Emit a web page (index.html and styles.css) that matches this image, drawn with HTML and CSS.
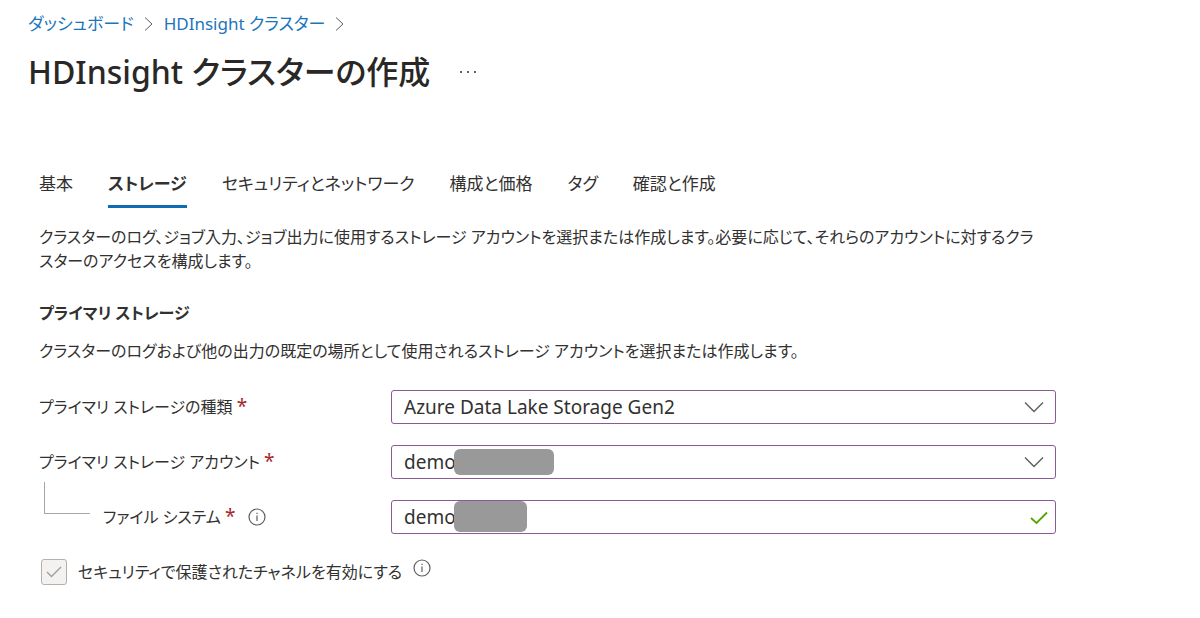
FILE: index.html
```html
<!DOCTYPE html>
<html lang="ja">
<head>
    <meta charset="UTF-8">
    <meta name="viewport" content="width=device-width, initial-scale=1.0">
    <title>HDInsight クラスターの作成</title>
    <link rel="stylesheet" href="styles.css">
</head>
<body>

    <header class="page-header">
        <nav class="breadcrumb">
            <a href="#">ダッシュボード</a>
            <svg class="separator" viewBox="0 0 10 16"><path d="M1 1.5 8 8 1 14.5"/></svg>
            <a href="#">HDInsight クラスター</a>
            <svg class="separator" viewBox="0 0 10 16"><path d="M1 1.5 8 8 1 14.5"/></svg>
        </nav>
        <div class="title-row">
            <h1>HDInsight クラスターの作成</h1>
            <button type="button" class="more" aria-label="その他">
                <svg viewBox="0 0 18 4"><circle cx="2" cy="2" r="1"/><circle cx="9" cy="2" r="1"/><circle cx="16" cy="2" r="1"/></svg>
            </button>
        </div>
    </header>

    <main class="content">
        <nav class="tabs">
            <a href="#">基本</a>
            <a href="#" class="active">ストレージ</a>
            <a href="#">セキュリティとネットワーク</a>
            <a href="#">構成と価格</a>
            <a href="#">タグ</a>
            <a href="#">確認と作成</a>
        </nav>

        <p class="intro">クラスターのログ、ジョブ入力、ジョブ出力に使用するストレージ アカウントを選択または作成します。必要に応じて、それらのアカウントに対するクラスターのアクセスを構成します。</p>

        <h2>プライマリ ストレージ</h2>
        <p>クラスターのログおよび他の出力の既定の場所として使用されるストレージ アカウントを選択または作成します。</p>

        <form class="form">
            <div class="row">
                <label for="tipo">プライマリ ストレージの種類 <span class="required">*</span></label>
                <div class="field">
                    <select id="tipo">
                        <option>Azure Data Lake Storage Gen2</option>
                    </select>
                    <svg class="chevron" viewBox="0 0 20 12"><path d="M1 1.5 10 10.5 19 1.5"/></svg>
                </div>
            </div>

            <div class="row">
                <label for="cuenta">プライマリ ストレージ アカウント <span class="required">*</span></label>
                <div class="field">
                    <select id="cuenta">
                        <option>demo</option>
                    </select>
                    <span class="mask mask-account"></span>
                    <svg class="chevron" viewBox="0 0 20 12"><path d="M1 1.5 10 10.5 19 1.5"/></svg>
                </div>
            </div>

            <div class="row">
                <div class="nested">
                    <span class="branch"></span>
                    <label for="sistema">ファイル システム <span class="required">*</span></label>
                    <svg class="info" viewBox="0 0 18 18"><circle cx="9" cy="9" r="8"/><path d="M9 7.5V13M9 4.8V6"/></svg>
                </div>
                <div class="field">
                    <input type="text" id="sistema" value="demo">
                    <span class="mask mask-filesystem"></span>
                    <svg class="valid" viewBox="0 0 18 14"><path d="M1 7 6.5 12 17 1.5"/></svg>
                </div>
            </div>

            <div class="check-row">
                <span class="checkbox">
                    <input type="checkbox" id="canal" checked disabled>
                    <svg viewBox="0 0 16 12"><path d="M1 6 5.5 10.5 15 1"/></svg>
                </span>
                <label for="canal">セキュリティで保護されたチャネルを有効にする</label>
                <svg class="info" viewBox="0 0 18 18"><circle cx="9" cy="9" r="8"/><path d="M9 7.5V13M9 4.8V6"/></svg>
            </div>
        </form>
    </main>

</body>
</html>
```

FILE: styles.css
```css
* {
    margin: 0;
    padding: 0;
    box-sizing: border-box;
}

body {
    font-family: "Noto Sans", "Noto Sans CJK JP", sans-serif;
    font-feature-settings: "palt";
    font-size: 16px;
    line-height: 24px;
    color: #323130;
    background: #fff;
}

a {
    color: inherit;
    text-decoration: none;
}

svg {
    fill: none;
    stroke: #605e5c;
    flex-shrink: 0;
}

/* Header */
.page-header {
    padding: 12px 28px 0;
}

.breadcrumb {
    display: flex;
    align-items: center;
    gap: 10px;
    font-size: 17px;
    color: #1b75bb;
}

.separator {
    width: 10px;
    height: 16px;
}

.title-row {
    display: flex;
    align-items: center;
    gap: 29px;
    margin-top: 12px;
}

h1 {
    font-size: 32px;
    line-height: 48px;
    font-weight: 500;
    color: #292827;
}

.more {
    display: flex;
    border: none;
    background: none;
}

.more svg {
    width: 18px;
    height: 4px;
    fill: #323130;
    stroke: none;
}

/* Content */
.content {
    padding: 0 12% 0 39px;
}

.tabs {
    display: flex;
    gap: 35px;
    margin-top: 76px;
    font-size: 17px;
}

.tabs a {
    padding-bottom: 9px;
    border-bottom: 3px solid transparent;
    white-space: nowrap;
}

.tabs .active {
    font-weight: 700;
    border-bottom-color: #0f6cb0;
}

.intro {
    max-width: 1006px;
    margin-top: 17px;
}

h2 {
    margin: 28px 0 14px;
    font-size: 16px;
    line-height: 24px;
    font-weight: 700;
}

/* Form */
.form {
    display: flex;
    flex-direction: column;
    gap: 21px;
    margin-top: 27px;
}

.row {
    display: grid;
    grid-template-columns: 352px 1fr;
    align-items: center;
}

.required {
    color: #a4262c;
    font-size: 19px;
    line-height: 20px;
}

.field {
    position: relative;
}

.field select,
.field input {
    display: block;
    width: 100%;
    height: 34px;
    padding: 0 12px;
    border: 1px solid #8a5a96;
    border-radius: 3px;
    background: #fff;
    color: #323130;
    font-family: inherit;
    font-size: 19px;
    appearance: none;
    outline: none;
}

.chevron,
.valid {
    position: absolute;
    top: 11px;
    right: 12px;
    width: 20px;
    height: 12px;
    stroke-width: 1.4;
    pointer-events: none;
}

.valid {
    right: 8px;
    width: 18px;
    height: 14px;
    stroke: #57a300;
    stroke-width: 1.8;
}

/* Hidden part of the account names */
.mask {
    position: absolute;
    top: 4px;
    left: 63px;
    width: 100px;
    height: 26px;
    border-radius: 6px;
    background: #999;
}

.mask-filesystem {
    top: 1px;
    width: 73px;
    height: 31px;
}

.nested {
    display: flex;
    align-items: center;
    gap: 13px;
    padding-left: 5px;
}

.branch {
    align-self: flex-start;
    width: 46px;
    height: 32px;
    margin-top: -23px;
    border-left: 1px solid #a8a6a4;
    border-bottom: 1px solid #a8a6a4;
}

.info {
    width: 18px;
    height: 18px;
    stroke-width: 1.2;
}

.check-row {
    display: flex;
    align-items: center;
    gap: 11px;
    margin-top: 4px;
    padding-left: 2px;
}

.check-row .info {
    align-self: flex-start;
}

.checkbox {
    display: grid;
    place-items: center;
}

.checkbox input,
.checkbox svg {
    grid-area: 1 / 1;
}

.checkbox input {
    width: 26px;
    height: 26px;
    border: 1px solid #b3b0ad;
    border-radius: 3px;
    background: #f3f2f1;
    appearance: none;
}

.checkbox svg {
    width: 16px;
    height: 12px;
    stroke: #a19f9d;
    stroke-width: 1.4;
    pointer-events: none;
}
```
